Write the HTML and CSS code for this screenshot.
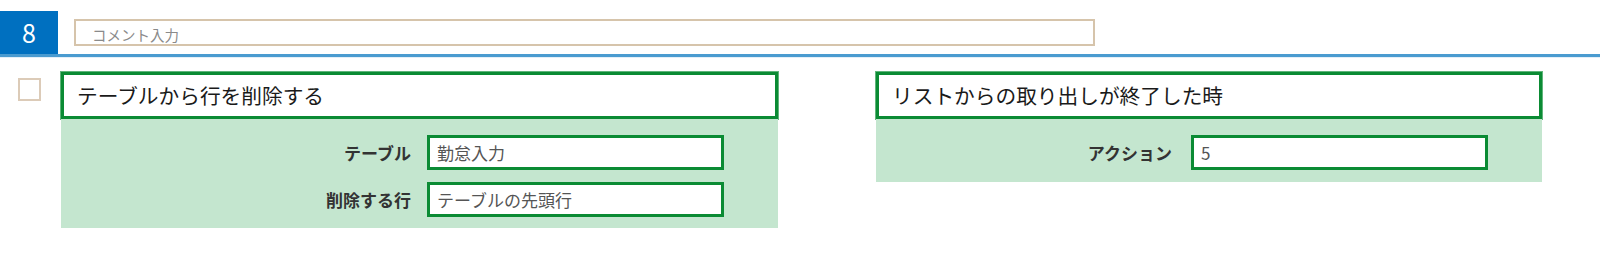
FILE: index.html
```html
<!DOCTYPE html>
<html lang="ja">
<head>
<meta charset="utf-8">
<link rel="stylesheet" href="styles.css">
</head>
<body>
<div class="topbar">
  <div class="step">8</div>
  <div class="comment">コメント入力</div>
</div>
<div class="content">
  <div class="check"></div>
  <div class="card card-a">
    <div class="card-head">テーブルから行を削除する</div>
    <div class="card-body">
      <div class="field"><span class="label">テーブル</span><span class="input">勤怠入力</span></div>
      <div class="field"><span class="label">削除する行</span><span class="input">テーブルの先頭行</span></div>
    </div>
  </div>
  <div class="card card-b">
    <div class="card-head">リストからの取り出しが終了した時</div>
    <div class="card-body">
      <div class="field"><span class="label">アクション</span><span class="input">5</span></div>
    </div>
  </div>
</div>
</body>
</html>
```
FILE: styles.css
```css
html, body {
  margin: 0;
  padding: 0;
  background: #ffffff;
  font-family: "Noto Sans CJK JP", "Noto Sans", sans-serif;
}
.topbar {
  display: flex;
  align-items: flex-start;
  padding-top: 11px;
  height: 43px;
  border-bottom: 3px solid #4a9bd0;
  box-shadow: 0 1px 0 #e3eff8;
}
.step {
  width: 58px;
  height: 43px;
  background: #0070c0;
  color: #ffffff;
  font-size: 25px;
  line-height: 43px;
  text-align: center;
}
.comment {
  margin-left: 16px;
  margin-top: 8px;
  box-sizing: border-box;
  width: 1021px;
  height: 27px;
  border: 2px solid #d6c4ab;
  color: #8a8a8a;
  font-size: 14.5px;
  line-height: 23px;
  padding-left: 16px;
  padding-top: 2px;
}
.content {
  display: flex;
  align-items: flex-start;
  padding-top: 15px;
  padding-left: 18px;
}
.check {
  width: 19px;
  height: 19px;
  border: 2px solid #dccbb8;
  margin-top: 6px;
  margin-right: 20px;
}
.card {
  display: flex;
  flex-direction: column;
}
.card-a { width: 717px; }
.card-b { width: 666px; margin-left: 98px; }
.card-head {
  height: 41px;
  border: 3px solid #0b8b34;
  box-shadow: 0 0 0 1px #5fb57a;
  background: #ffffff;
  color: #1a1a1a;
  font-size: 20.7px;
  line-height: 41px;
  padding-left: 13px;
}
.card-body {
  background: #c4e6cf;
  padding: 16px 0 11px;
  display: flex;
  flex-direction: column;
  gap: 12px;
}
.card-b .card-body { padding-bottom: 12px; }
.field {
  display: flex;
  justify-content: flex-end;
  align-items: center;
  padding-right: 54px;
}
.label {
  font-size: 17px;
  font-weight: bold;
  color: #333333;
  margin-right: 16px;
}
.card-b .label { margin-right: 19px; }
.input {
  width: 297px;
  height: 35px;
  box-sizing: border-box;
  border: 3px solid #0b8b34;
  background: #ffffff;
  color: #555555;
  font-size: 17px;
  line-height: 29px;
  padding-left: 7px;
}
```
